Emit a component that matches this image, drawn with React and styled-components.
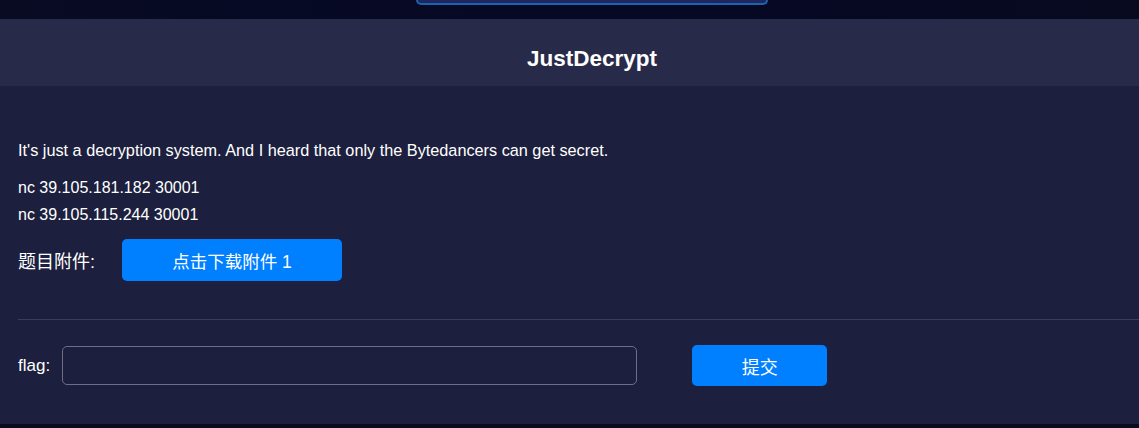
import styled, { createGlobalStyle } from "styled-components";
import { X } from "lucide-react";

const GlobalStyle = createGlobalStyle`
    html, body {
        margin: 0;
        padding: 0;
        background: #090c1c;
        overflow: hidden;
    }
    body {
        font-family: "Liberation Sans", Arial, "Noto Sans CJK SC", sans-serif;
        color: #fff;
    }
`;

export default function App() {
    return (
        <>
            <GlobalStyle />
            <Page>
                <Backdrop>
                    <TopPill />
                </Backdrop>
                <Modal>
                    <Header>
                        <Title>JustDecrypt</Title>
                        <Close><X size={24} strokeWidth={2.5} /></Close>
                    </Header>
                    <Body>
                        <Desc>It's just a decryption system. And I heard that only the Bytedancers can get secret.</Desc>
                        <Lines>
                            <div>nc 39.105.181.182 30001</div>
                            <div>nc 39.105.115.244 30001</div>
                        </Lines>
                        <AttachRow>
                            <Label $fs={18}>题目附件:</Label>
                            <Button $w={220} $h={42} $fs={17.5}>点击下载附件 1</Button>
                        </AttachRow>
                        <Divider />
                        <FlagRow>
                            <Label $fs={17}>flag:</Label>
                            <Input />
                            <Button $w={135} $h={41} $fs={18}>提交</Button>
                        </FlagRow>
                    </Body>
                </Modal>
            </Page>
        </>
    );
}

const Page = styled.div`
    width: 1184px;
    display: flex;
    flex-direction: column;
`;

const Backdrop = styled.div`
    height: 19px;
    display: flex;
    justify-content: center;
    background: linear-gradient(100deg, #080b22 0%, #060826 50%, #080a1f 100%);
`;

const TopPill = styled.div`
    width: 348px;
    height: 3px;
    background: #1f2660;
    border: 2px solid #1a64ad;
    border-top: none;
    border-radius: 0 0 18px 18px;
`;

const Modal = styled.div`
    background: #1c1f3d;
    height: 405px;
`;

const Header = styled.div`
    position: relative;
    height: 67px;
    box-sizing: border-box;
    padding-top: 13px;
    background: #282a4a;
    display: flex;
    align-items: center;
    justify-content: center;
`;

const Title = styled.h2`
    margin: 0;
    font-size: 22.5px;
    font-weight: 700;
    color: #fff;
`;

const Close = styled.span`
    position: absolute;
    right: 24px;
    top: 40px;
    color: #15173a;
    display: flex;
`;

const Body = styled.div`
    padding: 54px 18px 0;
    display: flex;
    flex-direction: column;
`;

const Desc = styled.p`
    margin: 0;
    font-size: 16.25px;
    line-height: 20px;
`;

const Lines = styled.div`
    margin-top: 14px;
    font-size: 16px;
    line-height: 27px;
`;

const AttachRow = styled.div`
    margin-top: 11px;
    display: flex;
    align-items: center;
    gap: 27px;
`;

const Label = styled.span`
    font-size: ${(p) => p.$fs}px;
    color: #fff;
`;

const Button = styled.button`
    width: ${(p) => p.$w}px;
    height: ${(p) => p.$h}px;
    border: none;
    border-radius: 5px;
    background: #0080ff;
    color: #fff;
    font-family: "Liberation Sans", Arial, "Noto Sans CJK SC", sans-serif;
    font-size: ${(p) => p.$fs}px;
    padding: 0;
`;

const Divider = styled.div`
    margin-top: 38px;
    height: 1px;
    background: #3a3c5a;
`;

const FlagRow = styled.div`
    margin-top: 25px;
    display: flex;
    align-items: center;

    ${Label} {
        margin-right: 12px;
    }
    ${Button} {
        margin-left: 55px;
    }
`;

const Input = styled.input`
    width: 575px;
    height: 39px;
    box-sizing: border-box;
    background: transparent;
    border: 1px solid #6e6f86;
    border-radius: 5px;
    color: #fff;
    outline: none;
`;
